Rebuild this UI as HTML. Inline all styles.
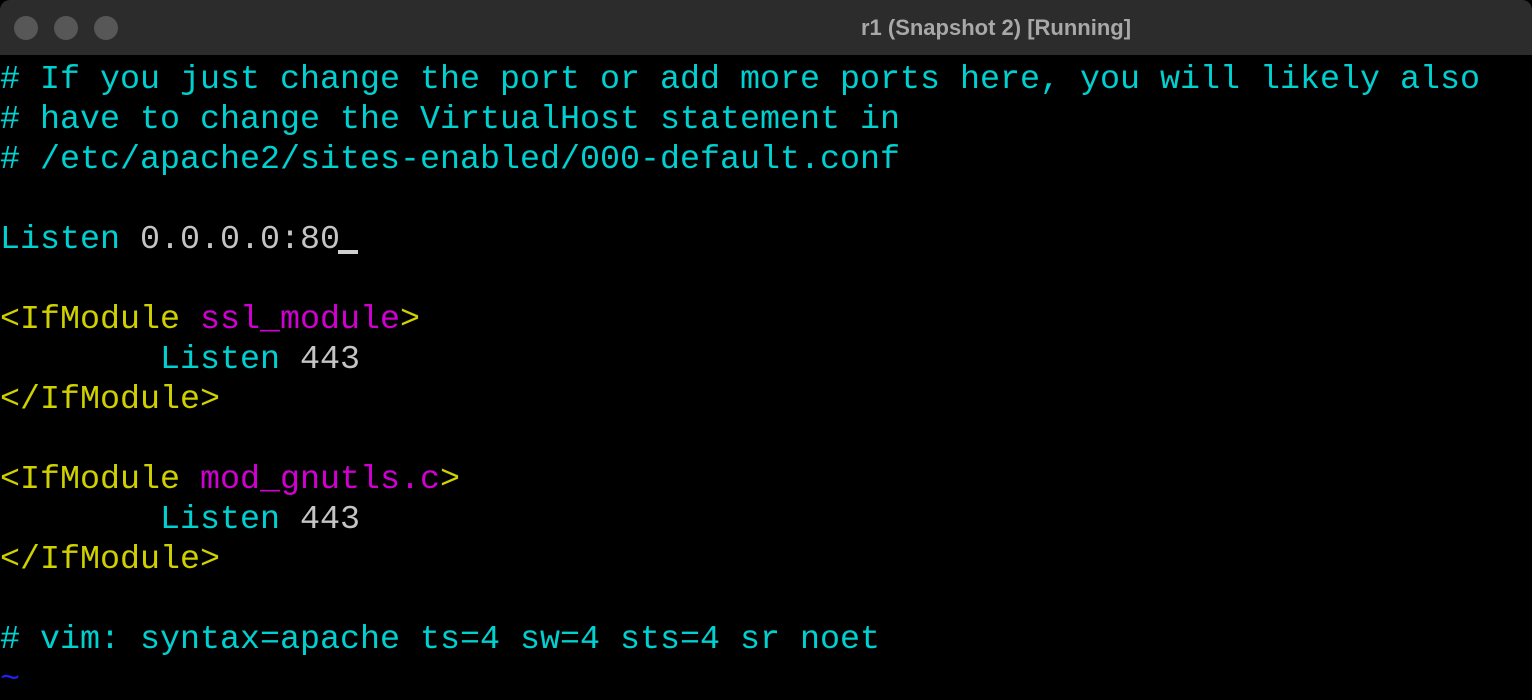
<!DOCTYPE html>
<html><head><meta charset="utf-8"><style>
html,body{margin:0;padding:0;background:#000;width:1532px;height:676px;overflow:hidden}
.bar{position:absolute;left:0;top:0;width:1532px;height:55px;background:#2c2c2c;border-radius:10px 10px 0 0}
.dot{position:absolute;top:16px;width:24px;height:24px;border-radius:50%;background:#575757}
.title{position:absolute;left:0;top:0;width:1532px;height:55px;text-align:center;padding-left:460px;box-sizing:border-box;font:bold 22px "Liberation Sans",sans-serif;line-height:55px;color:#a8a8a8}
pre{position:absolute;left:0;top:60px;margin:0;font-family:"Liberation Mono",monospace;font-size:33.33px;line-height:40px;color:#00d0d0;white-space:pre}
.y{color:#d0d000}.m{color:#d000d0}.g{color:#c4c4c4}.b{color:#2020ff}
.cur{position:absolute;left:338px;top:250px;width:20px;height:4px;background:#d0d0d0}
</style></head><body>
<div class="bar"></div>
<div class="dot" style="left:14px"></div><div class="dot" style="left:54px"></div><div class="dot" style="left:94px"></div>
<div class="title">r1 (Snapshot 2) [Running]</div>
<pre># If you just change the port or add more ports here, you will likely also
# have to change the VirtualHost statement in
# /etc/apache2/sites-enabled/000-default.conf

Listen <span class="g">0.0.0.0:80</span>

<span class="y">&lt;IfModule </span><span class="m">ssl_module</span><span class="y">&gt;</span>
        Listen <span class="g">443</span>
<span class="y">&lt;/IfModule&gt;</span>

<span class="y">&lt;IfModule </span><span class="m">mod_gnutls.c</span><span class="y">&gt;</span>
        Listen <span class="g">443</span>
<span class="y">&lt;/IfModule&gt;</span>

# vim: syntax=apache ts=4 sw=4 sts=4 sr noet
<span class="b">~</span></pre>
<div class="cur"></div>
</body></html>
